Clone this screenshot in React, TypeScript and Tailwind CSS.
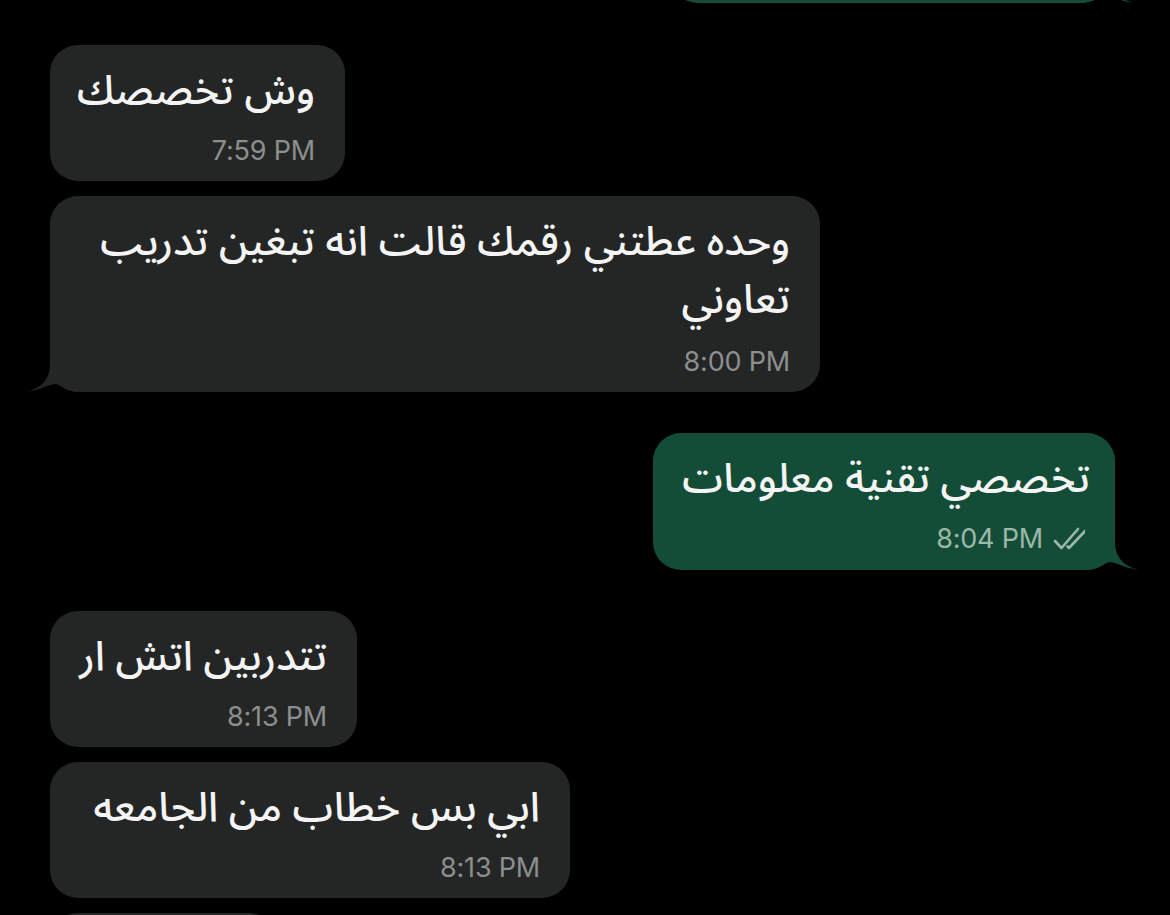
import React from "react";

const AR = { fontFamily: '"Noto Sans Arabic","DejaVu Sans","Noto Sans",sans-serif' };
const TIME = { fontFamily: 'Inter,"Liberation Sans",sans-serif' };

function Tail({ color, side }: { color: string; side: "left" | "right" }) {
  return (
    <svg
      width="55"
      height="48"
      viewBox="0 0 55 48"
      className={
        side === "right"
          ? "absolute right-[-25px] bottom-0"
          : "absolute left-[-25px] bottom-0 -scale-x-100"
      }
    >
      <path
        d="M0 0 L30 0 L30 20 C30 35 38 44 53 47.5 C42 47 31 40 24 40 C18 42 12 48 0 48 Z"
        fill={color}
      />
    </svg>
  );
}

function Checks() {
  return (
    <svg width="38" height="26" viewBox="0 0 38 26" className="ml-[9px]">
      <path
        d="M3 15 L9.5 22 L26 3 M15.5 20.5 L17 22 L35 3"
        fill="none"
        stroke="#9bb8a9"
        strokeWidth="2.6"
        strokeLinecap="round"
        strokeLinejoin="round"
      />
    </svg>
  );
}

function Incoming({
  lines,
  time,
  width,
  tail,
  timeGap = "mt-[16px]",
  className = "",
}: {
  lines: string[];
  time: string;
  width: string;
  tail?: boolean;
  timeGap?: string;
  className?: string;
}) {
  return (
    <div className={`relative self-start rounded-[28px] bg-[#242626] pt-[17px] pb-[15px] pl-[30px] pr-[30px] ${width} ${className}`}>
      {tail && <Tail color="#242626" side="left" />}
      <div dir="rtl" className="text-right text-[#f4f4f4] text-[41px] font-medium leading-[58px]" style={AR}>
        {lines.map((l, i) => (
          <div key={i} className="whitespace-nowrap">{l}</div>
        ))}
      </div>
      <div className={`${timeGap} flex h-[30px] items-center justify-end text-[27px] tracking-[-0.2px] text-[#8d8e8e]`} style={TIME}>
        {time}
      </div>
    </div>
  );
}

function Outgoing({
  text,
  time,
  width,
  className = "",
}: {
  text: string;
  time: string;
  width: string;
  className?: string;
}) {
  return (
    <div className={`relative self-end rounded-[28px] bg-[#144d37] pt-[17px] pb-[16px] pl-[30px] pr-[25px] ${width} ${className}`}>
      <Tail color="#144d37" side="right" />
      <div dir="rtl" className="whitespace-nowrap text-right text-[#f4f4f4] text-[41px] font-medium leading-[58px]" style={AR}>
        {text}
      </div>
      <div className="mt-[16px] flex h-[30px] items-center justify-end text-[27px] tracking-[-0.2px] text-[#9bb8a9]" style={TIME}>
        {time}
        <Checks />
      </div>
    </div>
  );
}

export default function App() {
  return (
    <div className="h-[915px] w-[1170px] overflow-hidden bg-black">
      <div className="flex flex-col pl-[50px] pr-[55px]">
        <div className="relative -mt-[133px] h-[136px] w-[440px] self-end rounded-[28px] bg-[#144d37] mr-[5px]">
          <Tail color="#144d37" side="right" />
        </div>
        <Incoming className="mt-[42px]" width="w-[295px]" lines={["وش تخصصك"]} time="7:59 PM" />
        <Incoming
          className="mt-[15px]"
          width="w-[770px]"
          tail
          timeGap="mt-[18px]"
          lines={["وحده عطتني رقمك قالت انه تبغين تدريب", "تعاوني"]}
          time="8:00 PM"
        />
        <Outgoing className="mt-[41px]" width="w-[462px]" text="تخصصي تقنية معلومات" time="8:04 PM" />
        <Incoming className="mt-[41px]" width="w-[307px]" lines={["تتدربين اتش ار"]} time="8:13 PM" />
        <Incoming className="mt-[15px]" width="w-[520px]" lines={["ابي بس خطاب من الجامعه"]} time="8:13 PM" />
        <div className="mt-[15px] h-[120px] w-[227px] self-start rounded-[28px] bg-[#242626]" />
      </div>
    </div>
  );
}
